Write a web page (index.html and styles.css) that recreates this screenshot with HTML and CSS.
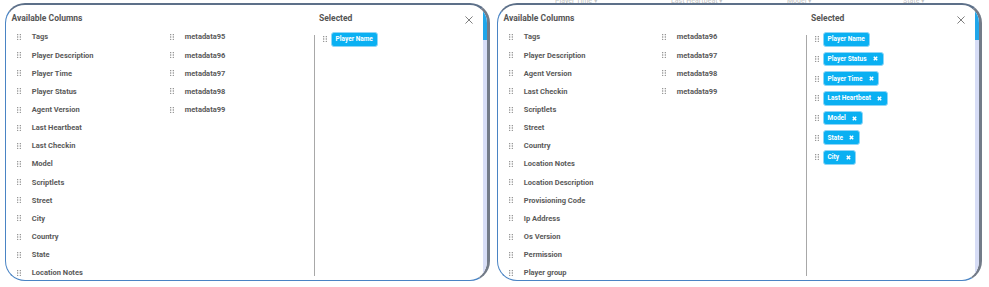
FILE: index.html
```html
<!DOCTYPE html>
<html>
<head>
<meta charset="utf-8">
<link rel="stylesheet" href="styles.css">
</head>
<body>
<div class="wrap">
  <div class="panel">
    <div class="main">
      <div class="available">
        <div class="title">Available Columns</div>
        <div class="cols">
          <div class="col col1">
            <div class="item"><svg class="grip" viewBox="0 0 4 6"><g fill="#7a7a7a"><circle cx="0.7" cy="0.7" r="0.65"/><circle cx="3.3" cy="0.7" r="0.65"/><circle cx="0.7" cy="3" r="0.65"/><circle cx="3.3" cy="3" r="0.65"/><circle cx="0.7" cy="5.3" r="0.65"/><circle cx="3.3" cy="5.3" r="0.65"/></g></svg><span>Tags</span></div>
            <div class="item"><svg class="grip" viewBox="0 0 4 6"><g fill="#7a7a7a"><circle cx="0.7" cy="0.7" r="0.65"/><circle cx="3.3" cy="0.7" r="0.65"/><circle cx="0.7" cy="3" r="0.65"/><circle cx="3.3" cy="3" r="0.65"/><circle cx="0.7" cy="5.3" r="0.65"/><circle cx="3.3" cy="5.3" r="0.65"/></g></svg><span>Player Description</span></div>
            <div class="item"><svg class="grip" viewBox="0 0 4 6"><g fill="#7a7a7a"><circle cx="0.7" cy="0.7" r="0.65"/><circle cx="3.3" cy="0.7" r="0.65"/><circle cx="0.7" cy="3" r="0.65"/><circle cx="3.3" cy="3" r="0.65"/><circle cx="0.7" cy="5.3" r="0.65"/><circle cx="3.3" cy="5.3" r="0.65"/></g></svg><span>Player Time</span></div>
            <div class="item"><svg class="grip" viewBox="0 0 4 6"><g fill="#7a7a7a"><circle cx="0.7" cy="0.7" r="0.65"/><circle cx="3.3" cy="0.7" r="0.65"/><circle cx="0.7" cy="3" r="0.65"/><circle cx="3.3" cy="3" r="0.65"/><circle cx="0.7" cy="5.3" r="0.65"/><circle cx="3.3" cy="5.3" r="0.65"/></g></svg><span>Player Status</span></div>
            <div class="item"><svg class="grip" viewBox="0 0 4 6"><g fill="#7a7a7a"><circle cx="0.7" cy="0.7" r="0.65"/><circle cx="3.3" cy="0.7" r="0.65"/><circle cx="0.7" cy="3" r="0.65"/><circle cx="3.3" cy="3" r="0.65"/><circle cx="0.7" cy="5.3" r="0.65"/><circle cx="3.3" cy="5.3" r="0.65"/></g></svg><span>Agent Version</span></div>
            <div class="item"><svg class="grip" viewBox="0 0 4 6"><g fill="#7a7a7a"><circle cx="0.7" cy="0.7" r="0.65"/><circle cx="3.3" cy="0.7" r="0.65"/><circle cx="0.7" cy="3" r="0.65"/><circle cx="3.3" cy="3" r="0.65"/><circle cx="0.7" cy="5.3" r="0.65"/><circle cx="3.3" cy="5.3" r="0.65"/></g></svg><span>Last Heartbeat</span></div>
            <div class="item"><svg class="grip" viewBox="0 0 4 6"><g fill="#7a7a7a"><circle cx="0.7" cy="0.7" r="0.65"/><circle cx="3.3" cy="0.7" r="0.65"/><circle cx="0.7" cy="3" r="0.65"/><circle cx="3.3" cy="3" r="0.65"/><circle cx="0.7" cy="5.3" r="0.65"/><circle cx="3.3" cy="5.3" r="0.65"/></g></svg><span>Last Checkin</span></div>
            <div class="item"><svg class="grip" viewBox="0 0 4 6"><g fill="#7a7a7a"><circle cx="0.7" cy="0.7" r="0.65"/><circle cx="3.3" cy="0.7" r="0.65"/><circle cx="0.7" cy="3" r="0.65"/><circle cx="3.3" cy="3" r="0.65"/><circle cx="0.7" cy="5.3" r="0.65"/><circle cx="3.3" cy="5.3" r="0.65"/></g></svg><span>Model</span></div>
            <div class="item"><svg class="grip" viewBox="0 0 4 6"><g fill="#7a7a7a"><circle cx="0.7" cy="0.7" r="0.65"/><circle cx="3.3" cy="0.7" r="0.65"/><circle cx="0.7" cy="3" r="0.65"/><circle cx="3.3" cy="3" r="0.65"/><circle cx="0.7" cy="5.3" r="0.65"/><circle cx="3.3" cy="5.3" r="0.65"/></g></svg><span>Scriptlets</span></div>
            <div class="item"><svg class="grip" viewBox="0 0 4 6"><g fill="#7a7a7a"><circle cx="0.7" cy="0.7" r="0.65"/><circle cx="3.3" cy="0.7" r="0.65"/><circle cx="0.7" cy="3" r="0.65"/><circle cx="3.3" cy="3" r="0.65"/><circle cx="0.7" cy="5.3" r="0.65"/><circle cx="3.3" cy="5.3" r="0.65"/></g></svg><span>Street</span></div>
            <div class="item"><svg class="grip" viewBox="0 0 4 6"><g fill="#7a7a7a"><circle cx="0.7" cy="0.7" r="0.65"/><circle cx="3.3" cy="0.7" r="0.65"/><circle cx="0.7" cy="3" r="0.65"/><circle cx="3.3" cy="3" r="0.65"/><circle cx="0.7" cy="5.3" r="0.65"/><circle cx="3.3" cy="5.3" r="0.65"/></g></svg><span>City</span></div>
            <div class="item"><svg class="grip" viewBox="0 0 4 6"><g fill="#7a7a7a"><circle cx="0.7" cy="0.7" r="0.65"/><circle cx="3.3" cy="0.7" r="0.65"/><circle cx="0.7" cy="3" r="0.65"/><circle cx="3.3" cy="3" r="0.65"/><circle cx="0.7" cy="5.3" r="0.65"/><circle cx="3.3" cy="5.3" r="0.65"/></g></svg><span>Country</span></div>
            <div class="item"><svg class="grip" viewBox="0 0 4 6"><g fill="#7a7a7a"><circle cx="0.7" cy="0.7" r="0.65"/><circle cx="3.3" cy="0.7" r="0.65"/><circle cx="0.7" cy="3" r="0.65"/><circle cx="3.3" cy="3" r="0.65"/><circle cx="0.7" cy="5.3" r="0.65"/><circle cx="3.3" cy="5.3" r="0.65"/></g></svg><span>State</span></div>
            <div class="item"><svg class="grip" viewBox="0 0 4 6"><g fill="#7a7a7a"><circle cx="0.7" cy="0.7" r="0.65"/><circle cx="3.3" cy="0.7" r="0.65"/><circle cx="0.7" cy="3" r="0.65"/><circle cx="3.3" cy="3" r="0.65"/><circle cx="0.7" cy="5.3" r="0.65"/><circle cx="3.3" cy="5.3" r="0.65"/></g></svg><span>Location Notes</span></div>
          </div>
          <div class="col">
            <div class="item"><svg class="grip" viewBox="0 0 4 6"><g fill="#7a7a7a"><circle cx="0.7" cy="0.7" r="0.65"/><circle cx="3.3" cy="0.7" r="0.65"/><circle cx="0.7" cy="3" r="0.65"/><circle cx="3.3" cy="3" r="0.65"/><circle cx="0.7" cy="5.3" r="0.65"/><circle cx="3.3" cy="5.3" r="0.65"/></g></svg><span>metadata95</span></div>
            <div class="item"><svg class="grip" viewBox="0 0 4 6"><g fill="#7a7a7a"><circle cx="0.7" cy="0.7" r="0.65"/><circle cx="3.3" cy="0.7" r="0.65"/><circle cx="0.7" cy="3" r="0.65"/><circle cx="3.3" cy="3" r="0.65"/><circle cx="0.7" cy="5.3" r="0.65"/><circle cx="3.3" cy="5.3" r="0.65"/></g></svg><span>metadata96</span></div>
            <div class="item"><svg class="grip" viewBox="0 0 4 6"><g fill="#7a7a7a"><circle cx="0.7" cy="0.7" r="0.65"/><circle cx="3.3" cy="0.7" r="0.65"/><circle cx="0.7" cy="3" r="0.65"/><circle cx="3.3" cy="3" r="0.65"/><circle cx="0.7" cy="5.3" r="0.65"/><circle cx="3.3" cy="5.3" r="0.65"/></g></svg><span>metadata97</span></div>
            <div class="item"><svg class="grip" viewBox="0 0 4 6"><g fill="#7a7a7a"><circle cx="0.7" cy="0.7" r="0.65"/><circle cx="3.3" cy="0.7" r="0.65"/><circle cx="0.7" cy="3" r="0.65"/><circle cx="3.3" cy="3" r="0.65"/><circle cx="0.7" cy="5.3" r="0.65"/><circle cx="3.3" cy="5.3" r="0.65"/></g></svg><span>metadata98</span></div>
            <div class="item"><svg class="grip" viewBox="0 0 4 6"><g fill="#7a7a7a"><circle cx="0.7" cy="0.7" r="0.65"/><circle cx="3.3" cy="0.7" r="0.65"/><circle cx="0.7" cy="3" r="0.65"/><circle cx="3.3" cy="3" r="0.65"/><circle cx="0.7" cy="5.3" r="0.65"/><circle cx="3.3" cy="5.3" r="0.65"/></g></svg><span>metadata99</span></div>
          </div>
        </div>
      </div>
      <div class="selected">
        <div class="sel-head">
          <div class="title">Selected</div>
          <svg class="close" viewBox="0 0 9 9"><path d="M0.5 0.5L8.5 8.5M8.5 0.5L0.5 8.5" stroke="#6f6f6f" stroke-width="1" fill="none"/></svg>
        </div>
        <div class="sel-body">
          <div class="chip-row"><svg class="grip" viewBox="0 0 4 6"><g fill="#7a7a7a"><circle cx="0.7" cy="0.7" r="0.65"/><circle cx="3.3" cy="0.7" r="0.65"/><circle cx="0.7" cy="3" r="0.65"/><circle cx="3.3" cy="3" r="0.65"/><circle cx="0.7" cy="5.3" r="0.65"/><circle cx="3.3" cy="5.3" r="0.65"/></g></svg><span class="chip">Player Name</span></div>
        </div>
      </div>
    </div>
    <div class="scroll"><div class="thumb"></div></div>
  </div>
</div>

<div class="wrap">
  <div class="ghost"><span>Player Time ▾</span><span>Last Heartbeat ▾</span><span>Model ▾</span><span>State ▾</span></div>
  <div class="panel">
    <div class="main">
      <div class="available">
        <div class="title">Available Columns</div>
        <div class="cols">
          <div class="col col1">
            <div class="item"><svg class="grip" viewBox="0 0 4 6"><g fill="#7a7a7a"><circle cx="0.7" cy="0.7" r="0.65"/><circle cx="3.3" cy="0.7" r="0.65"/><circle cx="0.7" cy="3" r="0.65"/><circle cx="3.3" cy="3" r="0.65"/><circle cx="0.7" cy="5.3" r="0.65"/><circle cx="3.3" cy="5.3" r="0.65"/></g></svg><span>Tags</span></div>
            <div class="item"><svg class="grip" viewBox="0 0 4 6"><g fill="#7a7a7a"><circle cx="0.7" cy="0.7" r="0.65"/><circle cx="3.3" cy="0.7" r="0.65"/><circle cx="0.7" cy="3" r="0.65"/><circle cx="3.3" cy="3" r="0.65"/><circle cx="0.7" cy="5.3" r="0.65"/><circle cx="3.3" cy="5.3" r="0.65"/></g></svg><span>Player Description</span></div>
            <div class="item"><svg class="grip" viewBox="0 0 4 6"><g fill="#7a7a7a"><circle cx="0.7" cy="0.7" r="0.65"/><circle cx="3.3" cy="0.7" r="0.65"/><circle cx="0.7" cy="3" r="0.65"/><circle cx="3.3" cy="3" r="0.65"/><circle cx="0.7" cy="5.3" r="0.65"/><circle cx="3.3" cy="5.3" r="0.65"/></g></svg><span>Agent Version</span></div>
            <div class="item"><svg class="grip" viewBox="0 0 4 6"><g fill="#7a7a7a"><circle cx="0.7" cy="0.7" r="0.65"/><circle cx="3.3" cy="0.7" r="0.65"/><circle cx="0.7" cy="3" r="0.65"/><circle cx="3.3" cy="3" r="0.65"/><circle cx="0.7" cy="5.3" r="0.65"/><circle cx="3.3" cy="5.3" r="0.65"/></g></svg><span>Last Checkin</span></div>
            <div class="item"><svg class="grip" viewBox="0 0 4 6"><g fill="#7a7a7a"><circle cx="0.7" cy="0.7" r="0.65"/><circle cx="3.3" cy="0.7" r="0.65"/><circle cx="0.7" cy="3" r="0.65"/><circle cx="3.3" cy="3" r="0.65"/><circle cx="0.7" cy="5.3" r="0.65"/><circle cx="3.3" cy="5.3" r="0.65"/></g></svg><span>Scriptlets</span></div>
            <div class="item"><svg class="grip" viewBox="0 0 4 6"><g fill="#7a7a7a"><circle cx="0.7" cy="0.7" r="0.65"/><circle cx="3.3" cy="0.7" r="0.65"/><circle cx="0.7" cy="3" r="0.65"/><circle cx="3.3" cy="3" r="0.65"/><circle cx="0.7" cy="5.3" r="0.65"/><circle cx="3.3" cy="5.3" r="0.65"/></g></svg><span>Street</span></div>
            <div class="item"><svg class="grip" viewBox="0 0 4 6"><g fill="#7a7a7a"><circle cx="0.7" cy="0.7" r="0.65"/><circle cx="3.3" cy="0.7" r="0.65"/><circle cx="0.7" cy="3" r="0.65"/><circle cx="3.3" cy="3" r="0.65"/><circle cx="0.7" cy="5.3" r="0.65"/><circle cx="3.3" cy="5.3" r="0.65"/></g></svg><span>Country</span></div>
            <div class="item"><svg class="grip" viewBox="0 0 4 6"><g fill="#7a7a7a"><circle cx="0.7" cy="0.7" r="0.65"/><circle cx="3.3" cy="0.7" r="0.65"/><circle cx="0.7" cy="3" r="0.65"/><circle cx="3.3" cy="3" r="0.65"/><circle cx="0.7" cy="5.3" r="0.65"/><circle cx="3.3" cy="5.3" r="0.65"/></g></svg><span>Location Notes</span></div>
            <div class="item"><svg class="grip" viewBox="0 0 4 6"><g fill="#7a7a7a"><circle cx="0.7" cy="0.7" r="0.65"/><circle cx="3.3" cy="0.7" r="0.65"/><circle cx="0.7" cy="3" r="0.65"/><circle cx="3.3" cy="3" r="0.65"/><circle cx="0.7" cy="5.3" r="0.65"/><circle cx="3.3" cy="5.3" r="0.65"/></g></svg><span>Location Description</span></div>
            <div class="item"><svg class="grip" viewBox="0 0 4 6"><g fill="#7a7a7a"><circle cx="0.7" cy="0.7" r="0.65"/><circle cx="3.3" cy="0.7" r="0.65"/><circle cx="0.7" cy="3" r="0.65"/><circle cx="3.3" cy="3" r="0.65"/><circle cx="0.7" cy="5.3" r="0.65"/><circle cx="3.3" cy="5.3" r="0.65"/></g></svg><span>Provisioning Code</span></div>
            <div class="item"><svg class="grip" viewBox="0 0 4 6"><g fill="#7a7a7a"><circle cx="0.7" cy="0.7" r="0.65"/><circle cx="3.3" cy="0.7" r="0.65"/><circle cx="0.7" cy="3" r="0.65"/><circle cx="3.3" cy="3" r="0.65"/><circle cx="0.7" cy="5.3" r="0.65"/><circle cx="3.3" cy="5.3" r="0.65"/></g></svg><span>Ip Address</span></div>
            <div class="item"><svg class="grip" viewBox="0 0 4 6"><g fill="#7a7a7a"><circle cx="0.7" cy="0.7" r="0.65"/><circle cx="3.3" cy="0.7" r="0.65"/><circle cx="0.7" cy="3" r="0.65"/><circle cx="3.3" cy="3" r="0.65"/><circle cx="0.7" cy="5.3" r="0.65"/><circle cx="3.3" cy="5.3" r="0.65"/></g></svg><span>Os Version</span></div>
            <div class="item"><svg class="grip" viewBox="0 0 4 6"><g fill="#7a7a7a"><circle cx="0.7" cy="0.7" r="0.65"/><circle cx="3.3" cy="0.7" r="0.65"/><circle cx="0.7" cy="3" r="0.65"/><circle cx="3.3" cy="3" r="0.65"/><circle cx="0.7" cy="5.3" r="0.65"/><circle cx="3.3" cy="5.3" r="0.65"/></g></svg><span>Permission</span></div>
            <div class="item"><svg class="grip" viewBox="0 0 4 6"><g fill="#7a7a7a"><circle cx="0.7" cy="0.7" r="0.65"/><circle cx="3.3" cy="0.7" r="0.65"/><circle cx="0.7" cy="3" r="0.65"/><circle cx="3.3" cy="3" r="0.65"/><circle cx="0.7" cy="5.3" r="0.65"/><circle cx="3.3" cy="5.3" r="0.65"/></g></svg><span>Player group</span></div>
          </div>
          <div class="col">
            <div class="item"><svg class="grip" viewBox="0 0 4 6"><g fill="#7a7a7a"><circle cx="0.7" cy="0.7" r="0.65"/><circle cx="3.3" cy="0.7" r="0.65"/><circle cx="0.7" cy="3" r="0.65"/><circle cx="3.3" cy="3" r="0.65"/><circle cx="0.7" cy="5.3" r="0.65"/><circle cx="3.3" cy="5.3" r="0.65"/></g></svg><span>metadata96</span></div>
            <div class="item"><svg class="grip" viewBox="0 0 4 6"><g fill="#7a7a7a"><circle cx="0.7" cy="0.7" r="0.65"/><circle cx="3.3" cy="0.7" r="0.65"/><circle cx="0.7" cy="3" r="0.65"/><circle cx="3.3" cy="3" r="0.65"/><circle cx="0.7" cy="5.3" r="0.65"/><circle cx="3.3" cy="5.3" r="0.65"/></g></svg><span>metadata97</span></div>
            <div class="item"><svg class="grip" viewBox="0 0 4 6"><g fill="#7a7a7a"><circle cx="0.7" cy="0.7" r="0.65"/><circle cx="3.3" cy="0.7" r="0.65"/><circle cx="0.7" cy="3" r="0.65"/><circle cx="3.3" cy="3" r="0.65"/><circle cx="0.7" cy="5.3" r="0.65"/><circle cx="3.3" cy="5.3" r="0.65"/></g></svg><span>metadata98</span></div>
            <div class="item"><svg class="grip" viewBox="0 0 4 6"><g fill="#7a7a7a"><circle cx="0.7" cy="0.7" r="0.65"/><circle cx="3.3" cy="0.7" r="0.65"/><circle cx="0.7" cy="3" r="0.65"/><circle cx="3.3" cy="3" r="0.65"/><circle cx="0.7" cy="5.3" r="0.65"/><circle cx="3.3" cy="5.3" r="0.65"/></g></svg><span>metadata99</span></div>
          </div>
        </div>
      </div>
      <div class="selected">
        <div class="sel-head">
          <div class="title">Selected</div>
          <svg class="close" viewBox="0 0 9 9"><path d="M0.5 0.5L8.5 8.5M8.5 0.5L0.5 8.5" stroke="#6f6f6f" stroke-width="1" fill="none"/></svg>
        </div>
        <div class="sel-body">
          <div class="chip-row"><svg class="grip" viewBox="0 0 4 6"><g fill="#7a7a7a"><circle cx="0.7" cy="0.7" r="0.65"/><circle cx="3.3" cy="0.7" r="0.65"/><circle cx="0.7" cy="3" r="0.65"/><circle cx="3.3" cy="3" r="0.65"/><circle cx="0.7" cy="5.3" r="0.65"/><circle cx="3.3" cy="5.3" r="0.65"/></g></svg><span class="chip">Player Name</span></div>
          <div class="chip-row"><svg class="grip" viewBox="0 0 4 6"><g fill="#7a7a7a"><circle cx="0.7" cy="0.7" r="0.65"/><circle cx="3.3" cy="0.7" r="0.65"/><circle cx="0.7" cy="3" r="0.65"/><circle cx="3.3" cy="3" r="0.65"/><circle cx="0.7" cy="5.3" r="0.65"/><circle cx="3.3" cy="5.3" r="0.65"/></g></svg><span class="chip">Player Status<svg class="x" viewBox="0 0 5 5"><path d="M0.8 0.8L4.2 4.2M4.2 0.8L0.8 4.2" stroke="#fff" stroke-width="1.5"/></svg></span></div>
          <div class="chip-row"><svg class="grip" viewBox="0 0 4 6"><g fill="#7a7a7a"><circle cx="0.7" cy="0.7" r="0.65"/><circle cx="3.3" cy="0.7" r="0.65"/><circle cx="0.7" cy="3" r="0.65"/><circle cx="3.3" cy="3" r="0.65"/><circle cx="0.7" cy="5.3" r="0.65"/><circle cx="3.3" cy="5.3" r="0.65"/></g></svg><span class="chip">Player Time<svg class="x" viewBox="0 0 5 5"><path d="M0.8 0.8L4.2 4.2M4.2 0.8L0.8 4.2" stroke="#fff" stroke-width="1.5"/></svg></span></div>
          <div class="chip-row"><svg class="grip" viewBox="0 0 4 6"><g fill="#7a7a7a"><circle cx="0.7" cy="0.7" r="0.65"/><circle cx="3.3" cy="0.7" r="0.65"/><circle cx="0.7" cy="3" r="0.65"/><circle cx="3.3" cy="3" r="0.65"/><circle cx="0.7" cy="5.3" r="0.65"/><circle cx="3.3" cy="5.3" r="0.65"/></g></svg><span class="chip">Last Heartbeat<svg class="x" viewBox="0 0 5 5"><path d="M0.8 0.8L4.2 4.2M4.2 0.8L0.8 4.2" stroke="#fff" stroke-width="1.5"/></svg></span></div>
          <div class="chip-row"><svg class="grip" viewBox="0 0 4 6"><g fill="#7a7a7a"><circle cx="0.7" cy="0.7" r="0.65"/><circle cx="3.3" cy="0.7" r="0.65"/><circle cx="0.7" cy="3" r="0.65"/><circle cx="3.3" cy="3" r="0.65"/><circle cx="0.7" cy="5.3" r="0.65"/><circle cx="3.3" cy="5.3" r="0.65"/></g></svg><span class="chip">Model<svg class="x" viewBox="0 0 5 5"><path d="M0.8 0.8L4.2 4.2M4.2 0.8L0.8 4.2" stroke="#fff" stroke-width="1.5"/></svg></span></div>
          <div class="chip-row"><svg class="grip" viewBox="0 0 4 6"><g fill="#7a7a7a"><circle cx="0.7" cy="0.7" r="0.65"/><circle cx="3.3" cy="0.7" r="0.65"/><circle cx="0.7" cy="3" r="0.65"/><circle cx="3.3" cy="3" r="0.65"/><circle cx="0.7" cy="5.3" r="0.65"/><circle cx="3.3" cy="5.3" r="0.65"/></g></svg><span class="chip">State<svg class="x" viewBox="0 0 5 5"><path d="M0.8 0.8L4.2 4.2M4.2 0.8L0.8 4.2" stroke="#fff" stroke-width="1.5"/></svg></span></div>
          <div class="chip-row"><svg class="grip" viewBox="0 0 4 6"><g fill="#7a7a7a"><circle cx="0.7" cy="0.7" r="0.65"/><circle cx="3.3" cy="0.7" r="0.65"/><circle cx="0.7" cy="3" r="0.65"/><circle cx="3.3" cy="3" r="0.65"/><circle cx="0.7" cy="5.3" r="0.65"/><circle cx="3.3" cy="5.3" r="0.65"/></g></svg><span class="chip">City<svg class="x" viewBox="0 0 5 5"><path d="M0.8 0.8L4.2 4.2M4.2 0.8L0.8 4.2" stroke="#fff" stroke-width="1.5"/></svg></span></div>
        </div>
      </div>
    </div>
    <div class="scroll"><div class="thumb"></div></div>
  </div>
</div>
</body>
</html>
```

FILE: styles.css
```css
* { box-sizing: border-box; }
html, body { margin: 0; background: #fff; }
body {
  width: 989px;
  height: 287px;
  overflow: hidden;
  display: flex;
  gap: 7px;
  padding: 0 0 0 5px;
  font-family: Roboto, "Liberation Sans", sans-serif;
  color: #555;
}
.wrap {
  position: relative;
  padding-top: 3px;
}
.ghost {
  position: absolute;
  top: -3px;
  left: 58px;
  height: 8px;
  overflow: hidden;
  display: flex;
  font-size: 7px;
  font-weight: 500;
  color: rgba(90, 90, 90, 0.35);
  z-index: 2;
  pointer-events: none;
}
.ghost span { width: 116px; }
.panel {
  width: 485px;
  height: 278px;
  border: 1.5px solid #4a84c4;
  border-top: 2px solid #5d7089;
  border-right: 3px solid #737b88;
  border-radius: 20px;
  overflow: hidden;
  background: #fff;
  display: flex;
}
.main {
  flex: 1;
  display: flex;
  min-width: 0;
}
.available {
  width: 307.5px;
  padding-top: 7px;
}
.title {
  font-size: 8.5px;
  font-weight: 700;
  line-height: 12px;
  color: #555;
  padding-left: 5.5px;
}
.cols {
  display: flex;
  margin-top: 3.9px;
  padding-left: 10.5px;
}
.col1 { width: 153px; }
.item {
  height: 18.15px;
  display: flex;
  align-items: center;
  font-size: 7.5px;
  font-weight: 700;
  color: #5a5a5a;
  white-space: nowrap;
}
.grip {
  width: 4px;
  height: 6px;
  flex: none;
}
.item .grip { margin-right: 11.3px; }
.selected {
  flex: 1;
  display: flex;
  flex-direction: column;
  padding-top: 7px;
  padding-bottom: 4.5px;
}
.sel-head {
  display: flex;
  justify-content: space-between;
  align-items: flex-start;
}
.close {
  width: 8px;
  height: 8px;
  margin-top: 4px;
  margin-right: 10px;
}
.sel-body {
  flex: 1;
  margin-top: 4px;
  padding-top: 4px;
  background: linear-gradient(#a8a8a8, #a8a8a8) no-repeat 0 7px / 1px calc(100% - 7px);
  display: flex;
  flex-direction: column;
  gap: 5.2px;
}
.chip-row {
  display: flex;
  align-items: center;
  padding-left: 9px;
}
.chip-row .grip { margin-right: 4.3px; }
.chip {
  display: inline-flex;
  align-items: center;
  height: 14.5px;
  padding: 0 4.5px 0 3.8px;
  background: #0ab0f2;
  border: 0.5px solid #8fd6f7;
  border-radius: 3px;
  color: #fff;
  font-size: 6.5px;
  font-weight: 700;
  white-space: nowrap;
}
.x {
  width: 5px;
  height: 5px;
  margin-left: 6.5px;
}
.scroll {
  width: 4.5px;
  background: #d7ddf6;
  flex: none;
}
.thumb {
  height: 35px;
  background: #1fa6ea;
}
```
